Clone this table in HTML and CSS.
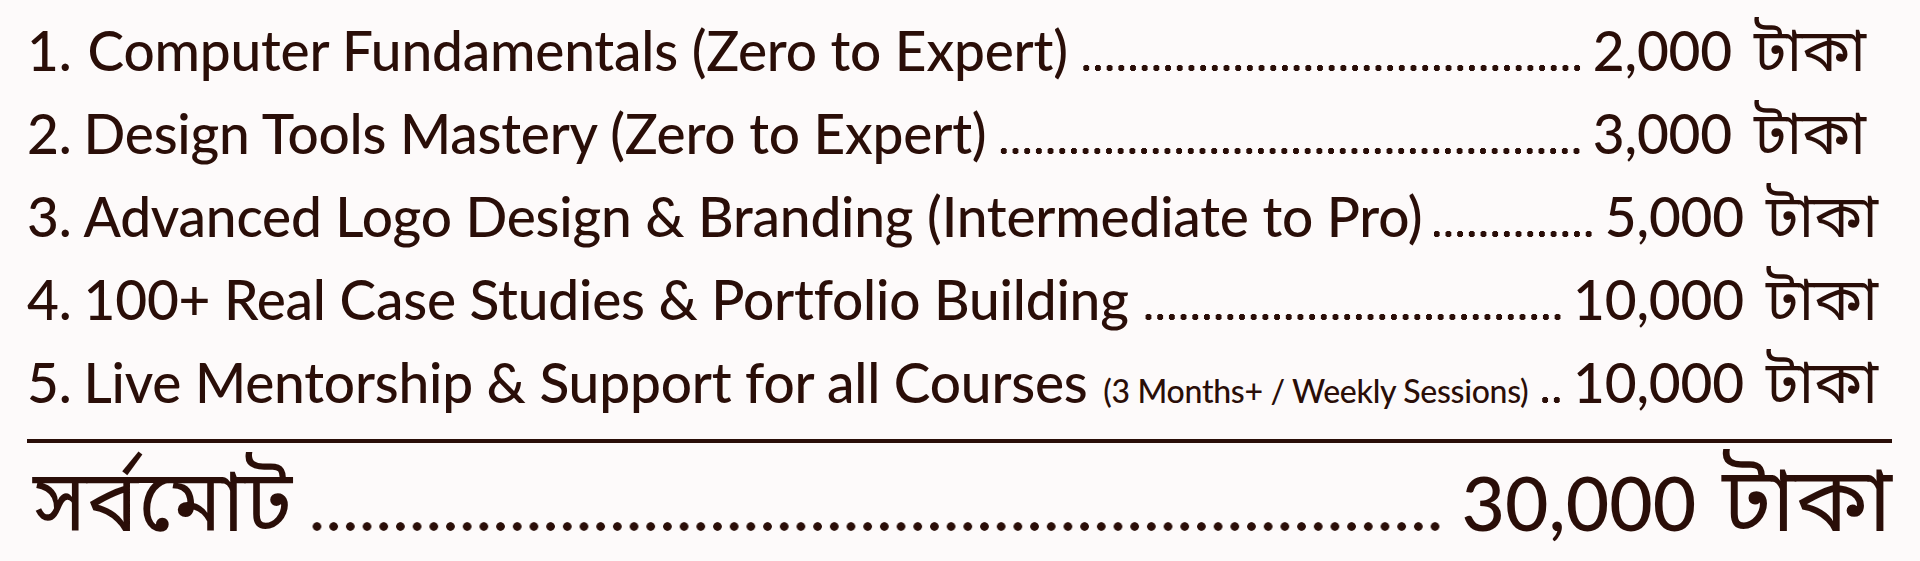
FILE: index.html
```html
<!DOCTYPE html>
<html lang="bn">
<head>
<meta charset="utf-8">
<title>Course Price List</title>
<link rel="stylesheet" href="styles.css">
</head>
<body>
<main class="price-list">
  <ul class="items">
    <li class="row row--short">
      <span class="name"><span class="num num--wide">1.</span>Computer Fundamentals (Zero to Expert)</span>
      <span class="dots"></span>
      <span class="amt">2,000</span><span class="cur">টাকা</span>
    </li>
    <li class="row row--short">
      <span class="name"><span class="num">2.</span>Design Tools Mastery (Zero to Expert)</span>
      <span class="dots"></span>
      <span class="amt">3,000</span><span class="cur">টাকা</span>
    </li>
    <li class="row">
      <span class="name"><span class="num">3.</span>Advanced Logo Design &amp; Branding (Intermediate to Pro)</span>
      <span class="dots"></span>
      <span class="amt">5,000</span><span class="cur">টাকা</span>
    </li>
    <li class="row">
      <span class="name"><span class="num">4.</span>100+ Real Case Studies &amp; Portfolio Building</span>
      <span class="dots"></span>
      <span class="amt">10,000</span><span class="cur">টাকা</span>
    </li>
    <li class="row">
      <span class="name"><span class="num">5.</span>Live Mentorship &amp; Support for all Courses <small class="note">(3 Months+ / Weekly Sessions)</small></span>
      <span class="dots"></span>
      <span class="amt">10,000</span><span class="cur">টাকা</span>
    </li>
  </ul>
  <div class="total">
    <span class="total-label">সর্বমোট</span>
    <span class="dots dots--big"></span>
    <span class="amt">30,000</span><span class="cur">টাকা</span>
  </div>
</main>
</body>
</html>
```
FILE: styles.css
```css
html, body {
  margin: 0;
  padding: 0;
  background: #fdfafa;
}

body {
  color: #2a0e08;
  font-family: Lato, "Noto Sans Bengali", sans-serif;
  font-weight: 500;
}

.price-list {
  padding: 9px 28px 0 27px;
}

.items {
  list-style: none;
  margin: 0;
  padding: 0 0 15px;
  border-bottom: 4px solid #2a0e08;
}

.row {
  display: flex;
  align-items: baseline;
  height: 83px;
  font-size: 55px;
  line-height: 83px;
  letter-spacing: -0.2px;
  white-space: nowrap;
  padding-right: 14px;
}

.row--short {
  padding-right: 26px;
}

.name {
  flex: none;
}

.num {
  margin-right: 12px;
}

.num--wide {
  margin-right: 16px;
}

.note {
  font-size: 32px;
  letter-spacing: -0.3px;
  margin-left: 2px;
}

.dots {
  flex: 1 1 auto;
  align-self: baseline;
  height: 6px;
  margin: 0 10px 0 12px;
  background-image: radial-gradient(circle at center, #2a0e08 2.9px, transparent 3.4px);
  background-size: 11.7px 6px;
  background-repeat: repeat-x;
  background-position: right bottom;
}

.amt {
  flex: none;
}

.cur {
  flex: none;
  margin-left: 22px;
  font-family: "Noto Sans Bengali", sans-serif;
  font-weight: 400;
  font-size: 1.08em;
  letter-spacing: 0;
}

.total {
  display: flex;
  align-items: baseline;
  margin-top: 11px;
  font-size: 75px;
  line-height: 96px;
  white-space: nowrap;
}

.total-label {
  flex: none;
  padding-left: 6px;
  font-family: "Noto Sans Bengali", sans-serif;
  font-weight: 400;
  font-size: 1.15em;
}

.dots--big {
  height: 9px;
  margin: 0 18px 0 14px;
  background-image: radial-gradient(circle at center, #2a0e08 3.9px, transparent 4.6px);
  background-size: 16.7px 9px;
}

.total .cur {
  margin-left: 26px;
  font-size: 1.2em;
}
```
